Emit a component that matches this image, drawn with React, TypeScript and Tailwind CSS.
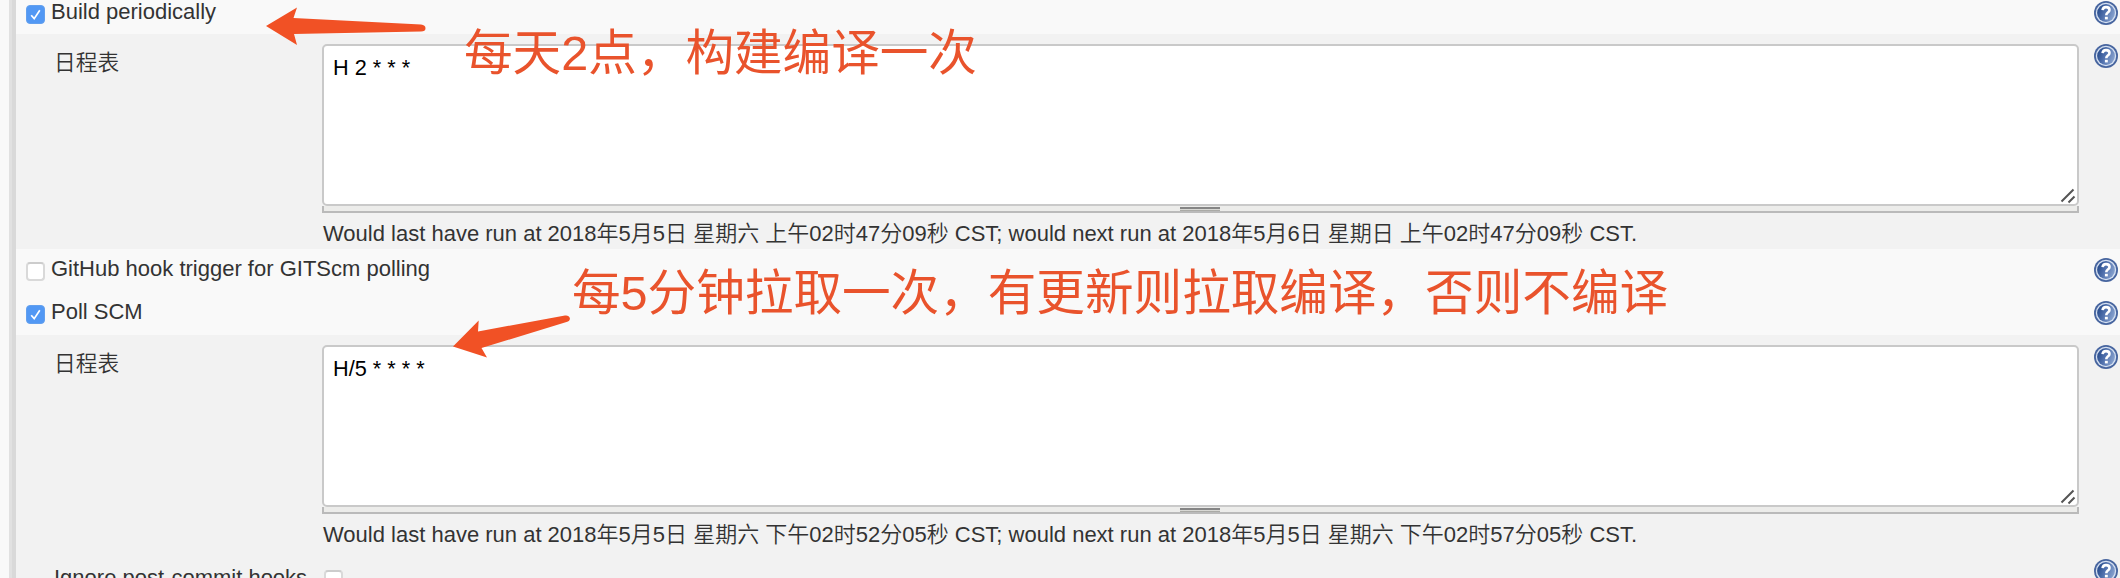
import React from "react";

const FONT = "font-['Liberation_Sans','Noto_Sans_CJK_SC',sans-serif]";

function HelpIcon() {
  return (
    <svg width="24" height="24" viewBox="0 0 24 24" className="block shrink-0">
      <defs>
        <linearGradient id="helpFill" x1="0" y1="0.3" x2="1" y2="0.7">
          <stop offset="0.1" stopColor="#2f5292" />
          <stop offset="0.5" stopColor="#5777b2" />
          <stop offset="1" stopColor="#8ba5d0" />
        </linearGradient>
      </defs>
      <circle cx="12" cy="12" r="12" fill="#47659f" />
      <circle cx="12" cy="12" r="10.2" fill="#d5e0f1" />
      <circle cx="12" cy="12" r="8.9" fill="url(#helpFill)" />
      <path
        d="M8.6 9.200C8.800 7 10.200 6.100 12 6.100c2.100 0 3.500 1 3.500 2.800 0 1.400-.8 2-1.700 2.600-1 .7-1.500 1.100-1.500 2.800"
        fill="none"
        stroke="#fff"
        strokeWidth="2.600"
      />
      <rect x="10.900" y="15.800" width="2.900" height="2.600" fill="#fff" />
    </svg>
  );
}

function CheckBox({ checked = false }: { checked?: boolean }) {
  return checked ? (
    <span className="flex h-[19px] w-[19px] shrink-0 items-center justify-center rounded-[4px] border border-[#63a0ee] bg-[#5298f4]">
      <svg width="17" height="17" viewBox="0 0 17 17">
        <path d="M4.200 9.200l3 3.400 5.600-8.400" fill="none" stroke="#fff" strokeWidth="1.700" />
      </svg>
    </span>
  ) : (
    <span className="block h-[19px] w-[19px] shrink-0 rounded-[4px] border-2 border-[#d9d9d9] border-t-[#cccccc] bg-white" />
  );
}

function OptionRow({ label, checked, className }: { label: string; checked?: boolean; className: string }) {
  return (
    <div className={`flex items-start bg-[#f9f9f9] pl-[10px] pr-[2px] ${className}`}>
      <div className="mt-[4px]">
        <CheckBox checked={checked} />
      </div>
      <span className="-mt-[2px] ml-[6px] grow whitespace-pre text-[22px] leading-[25px]">{label}</span>
      <HelpIcon />
    </div>
  );
}

function Schedule({ value, note, className }: { value: string; note: string; className: string }) {
  return (
    <div className={`flex items-start bg-[#f2f2f2] pr-[2px] pt-[10px] ${className}`}>
      <span className="w-[306px] shrink-0 pl-[38px] pt-[3px] text-[21.7px] font-[350] leading-[32px]">日程表</span>
      <div className="w-[1757px] shrink-0">
        <div className="flex h-[162px] flex-col justify-between rounded-[5px] border-2 border-[#c9c9c9] bg-white pl-[9px] pt-[9px] text-black">
          <span className="whitespace-pre text-[21.7px] leading-[25px]">{value}</span>
          <svg width="16" height="16" viewBox="0 0 16 16" className="mr-px self-end">
            <path d="M1.500 13.500L13.500 1.500M8.500 14.500L14.500 8.500" stroke="#555" strokeWidth="2" />
          </svg>
        </div>
        <div className="flex h-[7px] justify-center border-x-2 border-b-2 border-[#bababa] bg-[#ececea] pr-[2px] pt-px">
          <div className="h-[4px] w-10 border-b border-t-2 border-b-[#aaaaa6] border-t-[#858585] bg-[#d8d8d4]" />
        </div>
        <div className="ml-px mt-[8px] whitespace-pre text-[22px] font-[350] leading-[26px]">{note}</div>
      </div>
      <div className="ml-[15px]">
        <HelpIcon />
      </div>
    </div>
  );
}

export default function App() {
  return (
    <div className={`relative flex h-[578px] w-[2120px] overflow-hidden bg-[#f9f9f9] text-[#333] ${FONT}`}>
      <div className="ml-[9px] flex w-[7px] shrink-0 bg-[#d9d9d9]">
        <div className="w-[3px] bg-[#e1e1e1]" />
      </div>
      <div className="flex w-[2104px] flex-col">
        <OptionRow label="Build periodically" checked className="h-[34px] pt-px" />
        <Schedule
          value="H 2 * * *"
          note="Would last have run at 2018年5月5日 星期六 上午02时47分09秒 CST; would next run at 2018年5月6日 星期日 上午02时47分09秒 CST."
          className="h-[215px]"
        />
        <OptionRow label="GitHub hook trigger for GITScm polling" className="h-[43px] pt-[9px]" />
        <OptionRow label="Poll SCM" checked className="h-[43px] pt-[9px]" />
        <Schedule
          value="H/5 * * * *"
          note="Would last have run at 2018年5月5日 星期六 下午02时52分05秒 CST; would next run at 2018年5月5日 星期六 下午02时57分05秒 CST."
          className="h-[215px]"
        />
        <div className="flex h-[28px] items-start overflow-hidden bg-[#f2f2f2] pr-[2px] pt-[9px]">
          <span className="w-[306px] shrink-0 pl-[38px] pt-[6px] text-[22px] leading-[25px]">Ignore post-commit hooks</span>
          <div className="ml-[2px] mt-[11px] grow">
            <CheckBox />
          </div>
          <HelpIcon />
        </div>
      </div>

      <svg className="pointer-events-none absolute left-[260px] top-0" width="180" height="50" viewBox="260 0 180 50" fill="#f15125">
        <path d="M266 26L297 7.500 293.500 18 421 24.500Q425.500 25 425.500 28.300 425.500 31.500 421 31.500L294 34 297 45Z" />
      </svg>
      <svg className="pointer-events-none absolute left-[440px] top-[310px]" width="140" height="50" viewBox="440 310 140 50" fill="#f15125">
        <path d="M453 346.500L478.700 320.500 478 331.500 565 315.500Q569 315 569.800 318 570.500 321 566.500 322L481.500 348 487 357.500Z" />
      </svg>
      <div className="absolute left-[464px] top-[23px] whitespace-pre text-[48.6px] leading-[60px] text-[#e9532c]">每天2点，构建编译一次</div>
      <div className="absolute left-[572px] top-[263px] whitespace-pre text-[48.6px] leading-[60px] text-[#e9532c]">每5分钟拉取一次，有更新则拉取编译，否则不编译</div>
    </div>
  );
}
